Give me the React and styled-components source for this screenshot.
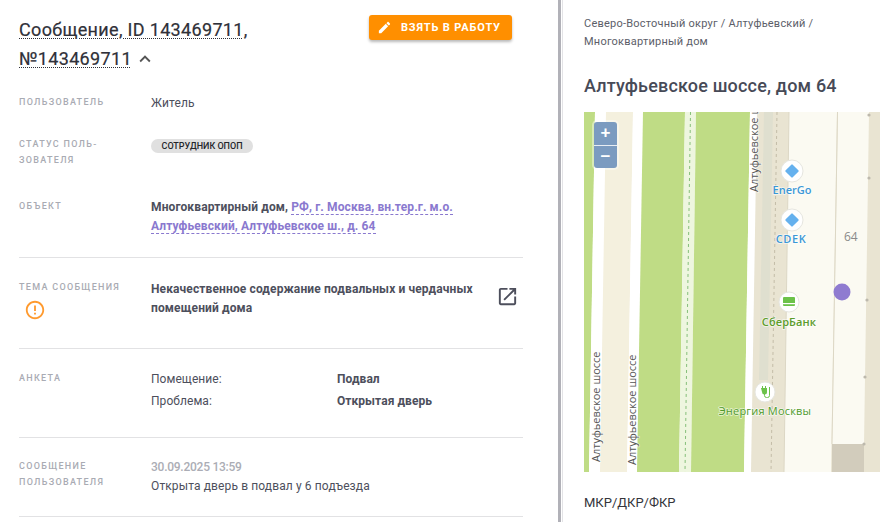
import React from "react";
import styled, { createGlobalStyle } from "styled-components";

const GlobalStyle = createGlobalStyle`
  html, body {
    margin: 0;
    height: 100%;
    overflow: hidden;
    background: #fff;
    font-family: Roboto, "Liberation Sans", sans-serif;
  }
`;

const Page = styled.div`
  display: flex;
  width: 880px;
  height: 522px;
  overflow: hidden;
`;

const LeftPanel = styled.main`
  box-sizing: border-box;
  width: 558px;
  flex: none;
  padding: 15px 35px 0 19px;
`;

const Splitter = styled.div`
  box-sizing: border-box;
  flex: none;
  width: 5px;
  border-left: 3px solid #b1b1b8;
  border-right: 1px solid #e3e3e6;
`;

const RightPanel = styled.aside`
  flex: 1;
  min-width: 0;
  padding: 14px 0 0 21px;
`;

const Header = styled.header`
  display: flex;
  justify-content: space-between;
  align-items: flex-start;
  padding-right: 11px;
  margin-bottom: 20px;
`;

const Title = styled.h1`
  margin: 0;
  width: 300px;
  font-size: 18px;
  line-height: 29px;
  font-weight: 400;
  letter-spacing: 0.33px;
  color: #2f3038;
  -webkit-text-stroke: 0.2px #2f3038;
`;

const TitleText = styled.span`
  text-decoration: underline dotted #2f3038 1px;
  text-underline-offset: 2px;
`;

const Chevron = styled.svg`
  width: 22px;
  height: 22px;
  margin-left: 2px;
  vertical-align: -5px;
  fill: #555;
`;

const TakeButton = styled.button`
  display: flex;
  align-items: center;
  gap: 9px;
  height: 25px;
  width: 143px;
  padding: 0 0 0 8px;
  border: 0;
  border-radius: 3px;
  background: #ff8f00;
  color: #fff;
  font: 700 11px Roboto, sans-serif;
  letter-spacing: 0.85px;
  white-space: nowrap;
  box-shadow: 0 2px 3px rgba(0, 0, 0, 0.28);
`;

const ButtonIcon = styled.svg`
  width: 15px;
  height: 15px;
  fill: #fff;
`;

const Row = styled.section`
  display: grid;
  grid-template-columns: 132px 1fr;
  padding: ${({ $top }) => $top}px 0 ${({ $bottom }) => $bottom}px;
  border-bottom: ${({ $divider }) => ($divider ? "1px solid #e2e2e4" : "0")};
`;

const Label = styled.div`
  padding-top: 2px;
  font-size: 9px;
  line-height: 15.5px;
  font-weight: 500;
  letter-spacing: 1.3px;
  text-transform: uppercase;
  color: #a9abb3;
`;

const Value = styled.div`
  padding-top: 1px;
  font-size: 12px;
  line-height: 19px;
  letter-spacing: 0.12px;
  color: #4d4f5c;
`;

const StrongValue = styled(Value)`
  font-weight: 700;
`;

const Dashed = styled.a`
  color: #8a79cf;
  border-bottom: 1px dashed #8a79cf;
`;

const Chip = styled.span`
  display: inline-block;
  height: 14px;
  padding: 0 10.5px;
  margin-top: 4px;
  border-radius: 7px;
  background: #e0e0e0;
  color: #25262b;
  font-size: 9px;
  line-height: 14px;
  font-weight: 500;
  vertical-align: top;
`;

const AlertIcon = styled.svg`
  display: block;
  width: 22px;
  height: 22px;
  margin: 3px 0 0 5px;
  fill: #ff9a2e;
`;

const TopicLine = styled.div`
  display: flex;
  justify-content: space-between;
`;

const TopicText = styled(StrongValue)`
  width: 330px;
  padding-top: 2px;
`;

const OpenIcon = styled.svg`
  width: 23px;
  height: 23px;
  flex: none;
  margin: 7px 4px 0 0;
  fill: #4d4f5c;
`;

const Survey = styled.div`
  display: grid;
  grid-template-columns: 186px 1fr;
  font-size: 12px;
  line-height: 21.5px;
  letter-spacing: 0.05px;
  color: #4d4f5c;
`;

const SurveyAnswer = styled.b`
  font-weight: 700;
`;

const MessageBody = styled.div`
  padding-top: 2px;
`;

const Stamp = styled.div`
  font-size: 12px;
  line-height: 17px;
  font-weight: 500;
  letter-spacing: -0.25px;
  color: #abadb5;
`;

const Crumbs = styled.div`
  padding-top: 1px;
  font-size: 11px;
  line-height: 18px;
  letter-spacing: 0.22px;
  color: #5c5e69;
`;

const PlaceName = styled.h2`
  margin: 23px 0 14px;
  font-size: 18px;
  line-height: 24px;
  font-weight: 500;
  letter-spacing: 0.18px;
  color: #474a57;
`;

const MapBox = styled.div`
  position: relative;
  height: 360px;
  overflow: hidden;
`;

const MapArt = styled.svg`
  display: block;
  width: 296px;
  height: 360px;
`;

const Zoom = styled.div`
  position: absolute;
  left: 10px;
  top: 10px;
  width: 23px;
  padding: 0;
  border-radius: 3px;
  box-shadow: 0 0 0 2px rgba(255, 255, 255, 0.4);
`;

const ZoomBtn = styled.div`
  height: 22.5px;
  background: #7b9bc0;
  color: #fff;
  font: 700 17px/22px "Liberation Sans", sans-serif;
  text-align: center;
  border-radius: ${({ $top }) => ($top ? "3px 3px 0 0" : "0 0 3px 3px")};
  border-bottom: ${({ $top }) => ($top ? "1px solid #e8edf3" : "0")};
`;

const Section = styled.div`
  margin-top: 22px;
  font-size: 13px;
  line-height: 18px;
  color: #34353b;
`;

const strips = [
  ["#bfdc85", "0,0 11,0 5,360 0,360"],
  ["#ffffff", "11,0 22,0 16,360 5,360"],
  ["#f4f0de", "22,0 49,0 43,360 16,360"],
  ["#ffffff", "49,0 59,0 53,360 43,360"],
  ["#bfdc85", "59,0 101,0 95,360 53,360"],
  ["#eef6df", "101,0 112,0 107,360 95,360"],
  ["#bfdc85", "112,0 166,0 160,360 107,360"],
  ["#ffffff", "166,0 173,0 167,360 160,360"],
  ["#e9e4d2", "173,0 296,0 296,360 167,360"],
  ["#dfdfcf", "180,0 189,0 184,268 175,268"],
  ["#fbfaf2", "205,0 253,0 247,360 200,360"],
  ["#fbfaf2", "254,0 285,0 280,332 248,332"],
  ["#d2ccbc", "248,332 280,332 280,360 248,360"],
];

const dots = [[285, 3], [285, 66], [283, 188], [281, 265], [280, 332]];

const mapLabel = {
  fontFamily: "'Open Sans', sans-serif",
  fontSize: 11,
  paintOrder: "stroke",
  stroke: "rgba(255,255,255,0.65)",
  strokeWidth: 1.5,
};

const Pin = ({ x, y, r = 11, children }) => (
  <g>
    <circle cx={x} cy={y} r={r} fill="#fff" stroke="#e6e6e0" strokeWidth="1" />
    {children}
  </g>
);

const MapView = () => (
  <MapBox>
    <MapArt viewBox="0 0 296 360">
      {strips.map(([fill, points]) => (
        <polygon key={points} fill={fill} points={points} />
      ))}
      <line x1="106.5" y1="0" x2="101" y2="360" stroke="#86c07a" strokeWidth="1" strokeDasharray="3 3" />
      <line x1="193" y1="0" x2="187" y2="360" stroke="#c4bda8" strokeWidth="1" strokeDasharray="3 3" />
      <line x1="205" y1="0" x2="200" y2="360" stroke="#dcd7c5" strokeWidth="1" />
      <line x1="253.5" y1="0" x2="248" y2="332" stroke="#dcd7c5" strokeWidth="1" />
      {dots.map(([cx, cy]) => (
        <circle key={cy} cx={cx} cy={cy} r="1.6" fill="#bdb9ad" />
      ))}

      <g fill="#555" style={mapLabel}>
        <text transform="translate(16 350) rotate(-90)">Алтуфьевское шоссе</text>
        <text transform="translate(52 353) rotate(-90)">Алтуфьевское шоссе</text>
        <text transform="translate(174 80) rotate(-90)">Алтуфьевское шоссе</text>
      </g>
      <text x="260" y="129" fontSize="12" fill="#8a8a8a" fontFamily="'Open Sans', sans-serif">64</text>

      <Pin x={208} y={59}>
        <rect x="203" y="54" width="10" height="10" rx="1" fill="#65b1ee" transform="rotate(45 208 59)" />
      </Pin>
      <text x="208" y="82" textAnchor="middle" fill="#3b98d6" fontWeight="600" style={mapLabel}>EnerGo</text>

      <Pin x={208} y={108}>
        <rect x="203" y="103" width="10" height="10" rx="1" fill="#65b1ee" transform="rotate(45 208 108)" />
      </Pin>
      <text x="207" y="131" textAnchor="middle" fill="#3b98d6" fontWeight="600" letterSpacing="0.6" style={mapLabel}>CDEK</text>

      <Pin x={205} y={190} r={10}>
        <rect x="199" y="185" width="12" height="9" rx="1" fill="#6cc24a" />
        <rect x="199" y="191" width="12" height="1.2" fill="#fff" />
      </Pin>
      <text x="205" y="214" textAnchor="middle" fill="#5c9c2b" fontWeight="600" letterSpacing="0.1" style={mapLabel}>СберБанк</text>

      <Pin x={181} y={280} r={10}>
        <path d="M177 276h1v-2h1v2h2v-2h1v2h1v4a2.5 2.5 0 0 1-5 0z" fill="#6cc24a" />
        <path d="M180.5 282v1.5a2 2 0 0 0 2 2h1a2 2 0 0 0 2-2V275" fill="none" stroke="#6cc24a" strokeWidth="1" />
      </Pin>
      <text x="181" y="303" textAnchor="middle" fill="#4f9a2a" letterSpacing="0.2" style={mapLabel}>Энергия Москвы</text>

      <circle cx="258" cy="180" r="8.5" fill="#8f7bd0" />
    </MapArt>
    <Zoom>
      <ZoomBtn $top>+</ZoomBtn>
      <ZoomBtn>−</ZoomBtn>
    </Zoom>
  </MapBox>
);

export default function App() {
  return (
    <Page>
      <GlobalStyle />
      <LeftPanel>
        <Header>
          <Title>
            <TitleText>Сообщение, ID 143469711, №143469711</TitleText>
            <Chevron viewBox="0 0 24 24">
              <path d="M12 8l-6 6 1.41 1.41L12 10.83l4.59 4.58L18 14z" />
            </Chevron>
          </Title>
          <TakeButton>
            <ButtonIcon viewBox="0 0 24 24">
              <path d="M3 17.25V21h3.75L17.81 9.94l-3.75-3.75L3 17.25zM20.71 7.04c.39-.39.39-1.02 0-1.41l-2.34-2.34c-.39-.39-1.02-.39-1.41 0l-1.83 1.83 3.75 3.75 1.83-1.83z" />
            </ButtonIcon>
            ВЗЯТЬ В РАБОТУ
          </TakeButton>
        </Header>

        <Row $top={0} $bottom={22}>
          <Label>Пользователь</Label>
          <Value>Житель</Value>
        </Row>
        <Row $top={0} $bottom={29}>
          <Label>Статус поль-<br />зователя</Label>
          <div><Chip>СОТРУДНИК ОПОП</Chip></div>
        </Row>
        <Row $top={0} $bottom={21} $divider>
          <Label>Объект</Label>
          <StrongValue>
            Многоквартирный дом,{" "}
            <Dashed>РФ, г. Москва, вн.тер.г. м.о. Алтуфьевский, Алтуфьевское ш., д. 64</Dashed>
          </StrongValue>
        </Row>
        <Row $top={20} $bottom={27.5} $divider>
          <div>
            <Label>Тема сообщения</Label>
            <AlertIcon viewBox="0 0 24 24">
              <path d="M11 15h2v2h-2zm0-8h2v6h-2zm.99-5C6.47 2 2 6.48 2 12s4.47 10 9.99 10C17.52 22 22 17.52 22 12S17.52 2 11.99 2zM12 20c-4.42 0-8-3.58-8-8s3.58-8 8-8 8 3.58 8 8-3.58 8-8 8z" />
            </AlertIcon>
          </div>
          <TopicLine>
            <TopicText>Некачественное содержание подвальных и чердачных помещений дома</TopicText>
            <OpenIcon viewBox="0 0 24 24">
              <path d="M19 19H5V5h7V3H5c-1.11 0-2 .9-2 2v14c0 1.1.89 2 2 2h14c1.1 0 2-.9 2-2v-7h-2v7zM14 3v2h3.59l-9.83 9.83 1.41 1.41L19 6.41V10h2V3h-7z" />
            </OpenIcon>
          </TopicLine>
        </Row>
        <Row $top={20} $bottom={25} $divider>
          <Label>Анкета</Label>
          <Survey>
            <span>Помещение:</span>
            <SurveyAnswer>Подвал</SurveyAnswer>
            <span>Проблема:</span>
            <SurveyAnswer>Открытая дверь</SurveyAnswer>
          </Survey>
        </Row>
        <Row $top={19} $bottom={20} $divider>
          <Label>Сообщение<br />пользователя</Label>
          <MessageBody>
            <Stamp>30.09.2025 13:59</Stamp>
            <Value>Открыта дверь в подвал у 6 подъезда</Value>
          </MessageBody>
        </Row>
      </LeftPanel>
      <Splitter />
      <RightPanel>
        <Crumbs>
          Северо-Восточный округ / Алтуфьевский /<br />Многоквартирный дом
        </Crumbs>
        <PlaceName>Алтуфьевское шоссе, дом 64</PlaceName>
        <MapView />
        <Section>МКР/ДКР/ФКР</Section>
      </RightPanel>
    </Page>
  );
}
